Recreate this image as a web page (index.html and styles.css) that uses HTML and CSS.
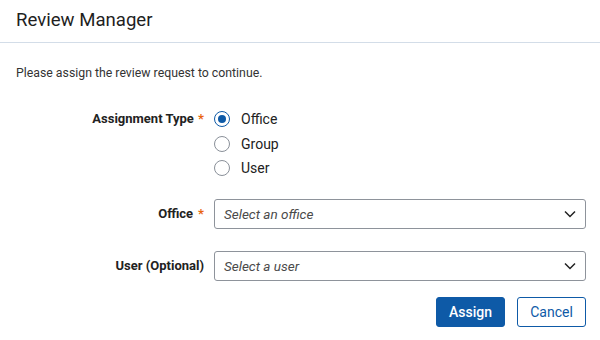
FILE: index.html
```html
<!DOCTYPE html>
<html>
<head>
<meta charset="utf-8">
<link rel="stylesheet" href="styles.css">
</head>
<body>
<div class="dialog">
  <header class="header"><h1 class="title">Review Manager</h1></header>
  <div class="content">
    <p class="intro">Please assign the review request to continue.</p>
    <div class="form">
      <div class="label label-top">Assignment Type <span class="req">*</span></div>
      <div class="radios">
        <label class="radio-row"><span class="radio checked"></span><span class="radio-text">Office</span></label>
        <label class="radio-row"><span class="radio"></span><span class="radio-text">Group</span></label>
        <label class="radio-row"><span class="radio"></span><span class="radio-text">User</span></label>
      </div>
      <div class="label label-mid sel1">Office <span class="req">*</span></div>
      <div class="select sel1">
        <span class="placeholder">Select an office</span>
        <svg class="chev" width="12" height="8" viewBox="0 0 12 8"><path d="M1 1.5 L6 6.5 L11 1.5" fill="none" stroke="#222" stroke-width="1.5"/></svg>
      </div>
      <div class="label label-mid sel2">User (Optional)</div>
      <div class="select sel2">
        <span class="placeholder">Select a user</span>
        <svg class="chev" width="12" height="8" viewBox="0 0 12 8"><path d="M1 1.5 L6 6.5 L11 1.5" fill="none" stroke="#222" stroke-width="1.5"/></svg>
      </div>
    </div>
    <div class="actions">
      <button class="btn primary">Assign</button>
      <button class="btn secondary">Cancel</button>
    </div>
  </div>
</div>
</body>
</html>
```
FILE: styles.css
```css
* { box-sizing: border-box; }
html, body { margin: 0; padding: 0; background: #fff; }
body { font-family: Roboto, "Liberation Sans", sans-serif; color: #222; width: 600px; height: 340px; overflow: hidden; }
.header { height: 43px; border-bottom: 1px solid #d3dde8; padding: 0 16px; display: flex; align-items: center; }
.title { margin: 0; font-size: 18.6px; font-weight: 400; color: #1f1f1f; line-height: 1; padding-bottom: 2px; }
.content { padding: 22px 14px 0 16px; }
.intro { margin: 0; font-size: 12.3px; color: #333; line-height: 16px; }
.form { display: grid; grid-template-columns: 188px 1fr; column-gap: 10px; margin-top: 26px; }
.label { font-size: 13px; font-weight: 700; color: #222; text-align: right; }
.label-top { line-height: 16px; padding-top: 4px; }
.label-mid { display: flex; align-items: center; justify-content: flex-end; gap: 4px; }
.req { color: #e8650f; font-weight: 700; margin-left: 1px; }
.radios { display: flex; flex-direction: column; }
.radio-row { display: flex; align-items: center; height: 24.5px; font-size: 14px; color: #222; }
.radio { width: 16px; height: 16px; border: 1px solid #8a9099; border-radius: 50%; display: flex; align-items: center; justify-content: center; margin-right: 11px; }
.radio.checked { border-color: #0e5aa7; }
.radio.checked::after { content: ""; width: 8px; height: 8px; border-radius: 50%; background: #0e5aa7; }
.select { height: 30px; border: 1px solid #8e939b; border-radius: 3px; display: flex; align-items: center; justify-content: space-between; padding: 0 9px 0 9px; }
.placeholder { font-size: 13.5px; font-style: italic; color: #4a4a4a; }
.chev { display: block; }
.sel1 { margin-top: 18px; }
.sel2 { margin-top: 22px; }
.actions { display: flex; justify-content: flex-end; gap: 12px; margin-top: 16px; }
.btn { height: 30px; width: 69px; border-radius: 3px; font-family: Roboto, "Liberation Sans", sans-serif; font-size: 14px; padding: 0; cursor: pointer; }
.primary { background: #0e5aa7; border: 1px solid #0e5aa7; color: #fff; font-weight: 500; }
.secondary { background: #fff; border: 1px solid #0e5aa7; color: #0e5aa7; }
```
